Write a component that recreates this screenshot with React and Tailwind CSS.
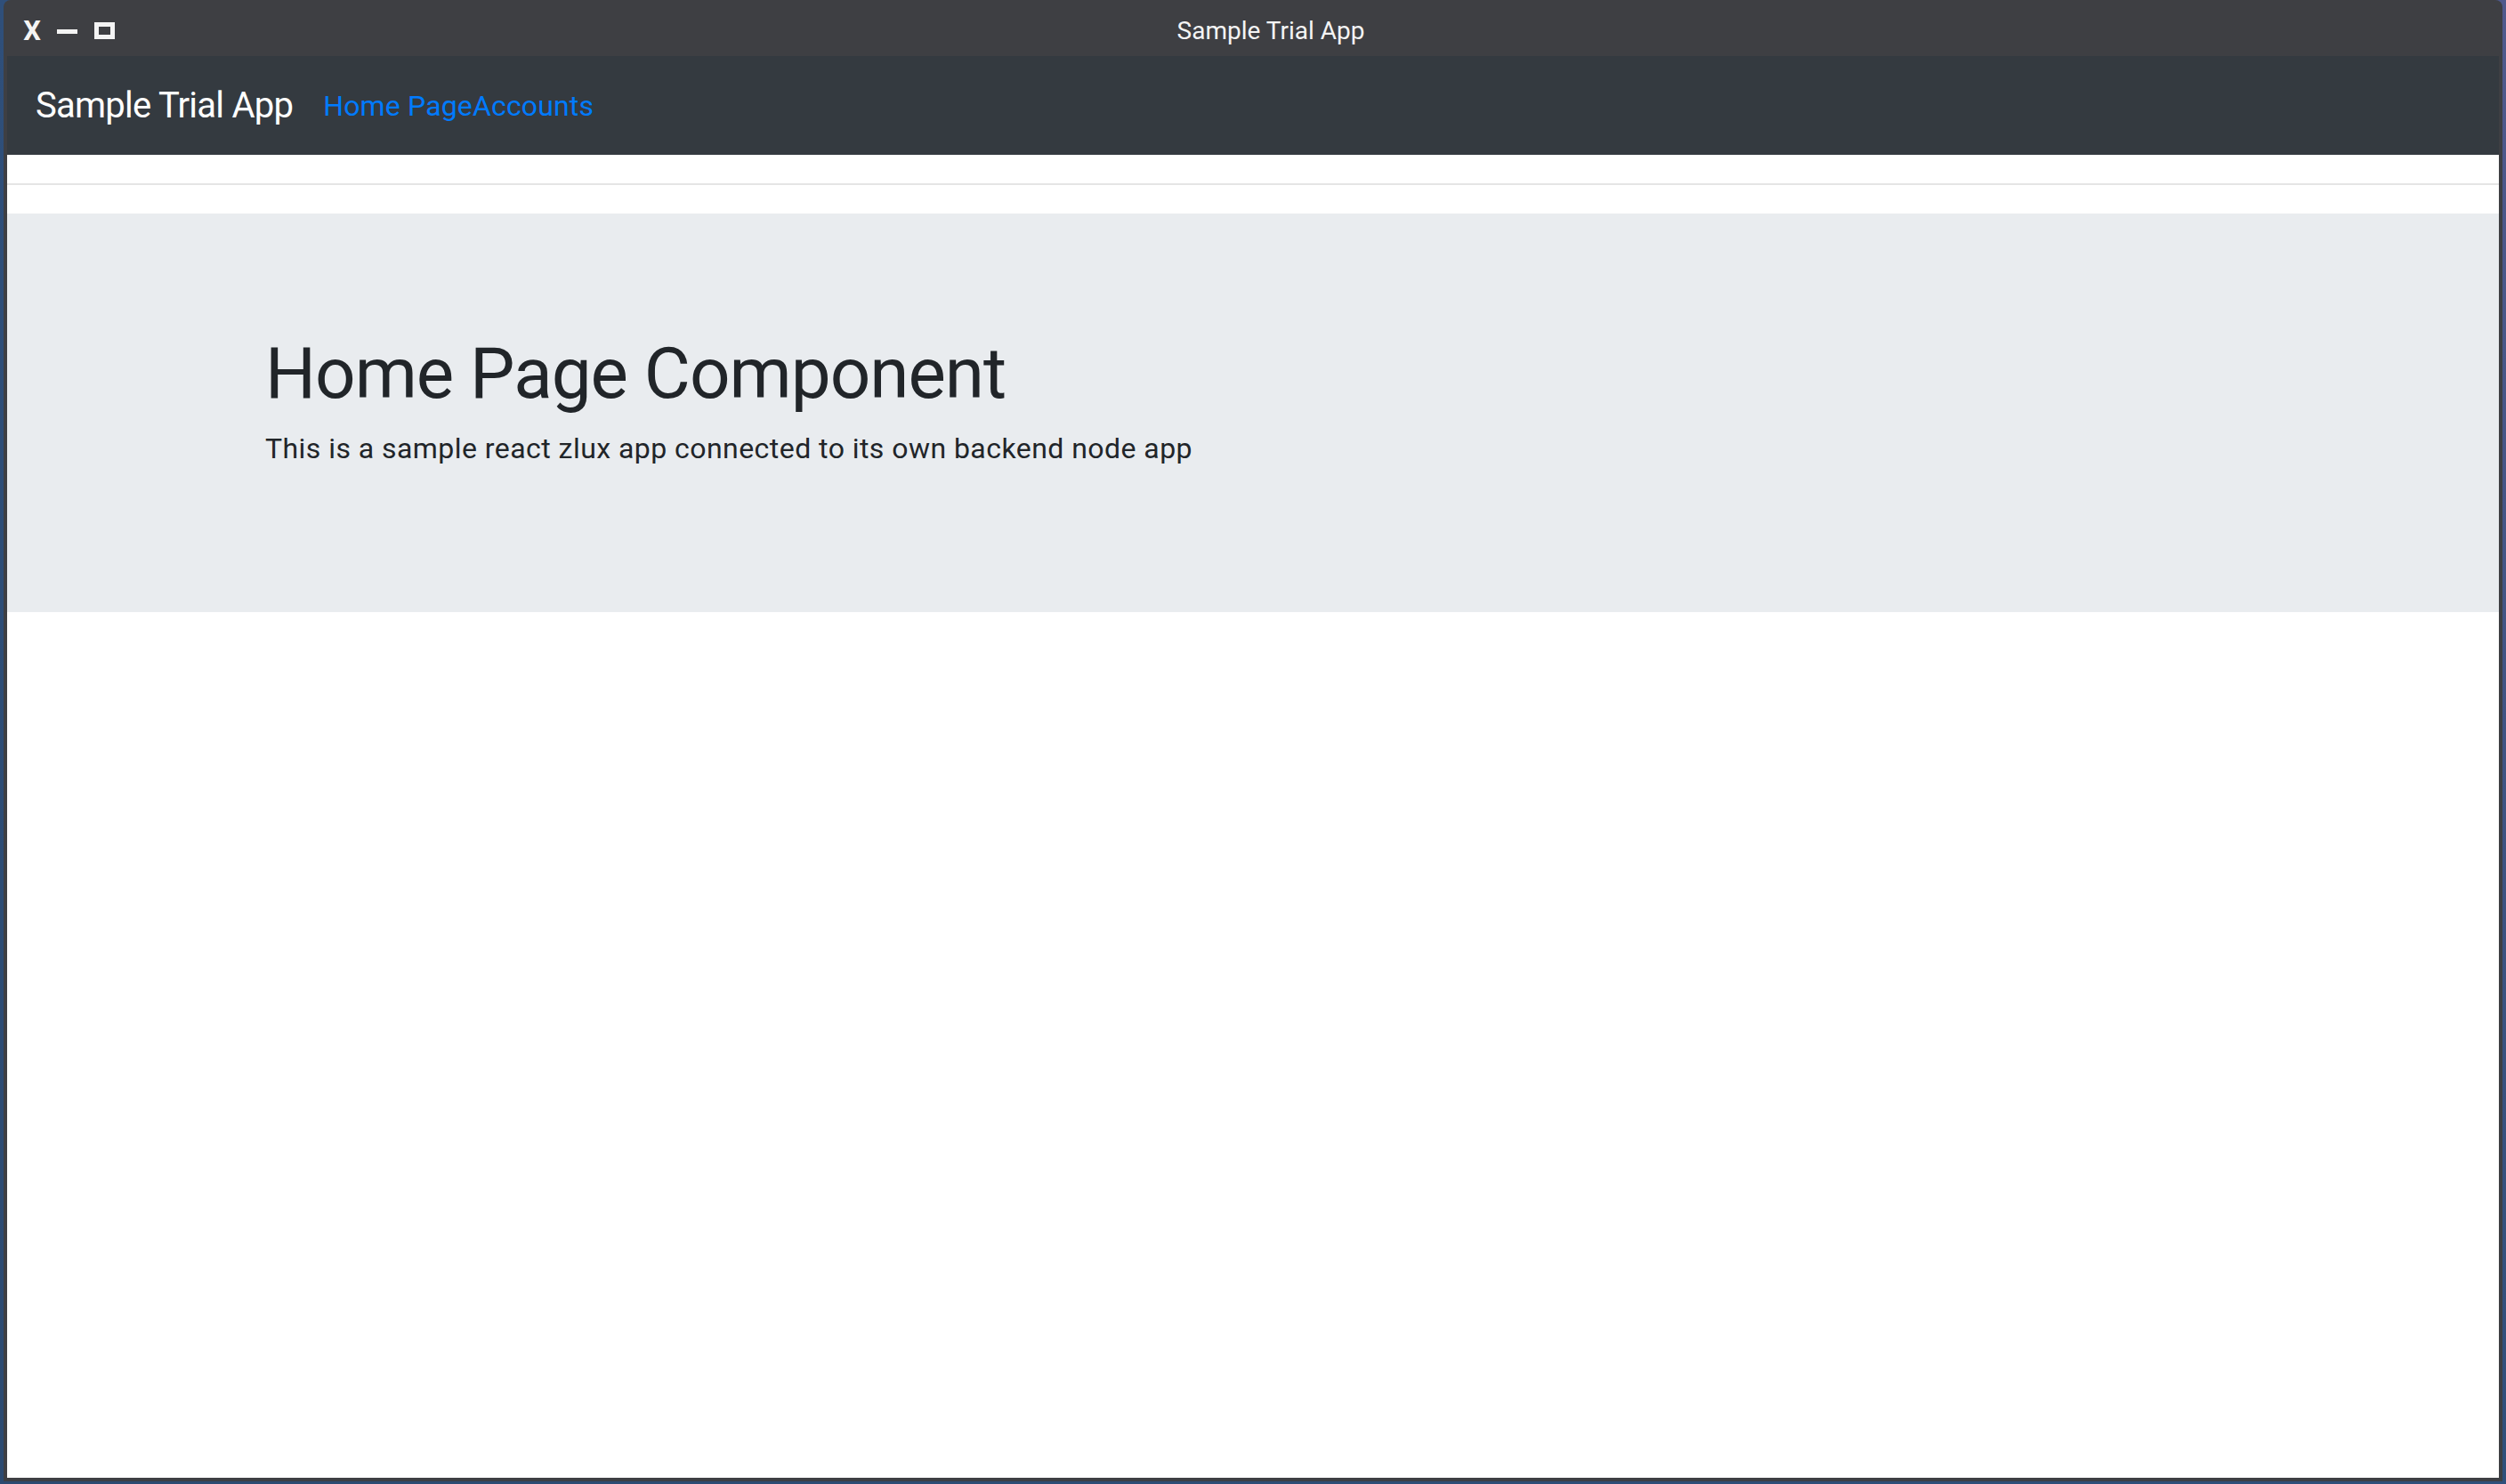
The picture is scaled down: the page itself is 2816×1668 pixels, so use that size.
import React from "react";

const TitleBar = ({ title }) => (
  <div className="h-[63px] flex items-center shrink-0 pt-[6px]">
    {/* window controls */}
    <div className="w-[140px] h-full flex items-center pl-[22px] text-[#f4f4f4]">
      <span
        className="text-[31px] font-bold leading-none w-[20px] flex justify-center"
        style={{ fontFamily: "Roboto, sans-serif" }}
      >
        X
      </span>
      <span className="ml-[18px] w-[23px] h-[5px] bg-[#f4f4f4] mt-[1px]" />
      <span className="ml-[19px] w-[23px] h-[19px] border-[5px] border-[#f4f4f4]" />
    </div>
    <div
      className="flex-1 text-center text-[28px] text-[#f4f4f4] leading-none"
      style={{ fontFamily: "Roboto, sans-serif" }}
    >
      {title}
    </div>
    <div className="w-[100px]" />
  </div>
);

const NavBar = () => (
  <nav className="h-[111px] shrink-0 bg-[#343a40] flex items-center px-[32px]">
    <span className="text-[40px] text-white mr-[34px] leading-none tracking-[-0.75px]">Sample Trial App</span>
    <div className="flex text-[32px] text-[#007bff] leading-none tracking-[0.15px]">
      <a>Home Page</a>
      <a>Accounts</a>
    </div>
  </nav>
);

export default function App() {
  return (
    <div
      className="w-full h-screen overflow-hidden bg-linear-to-bl from-[#4f598c] via-[#2f4f7a] to-[#2c4a70] px-[4px] pb-[3px]"
      style={{ fontFamily: "Roboto, 'Liberation Sans', sans-serif" }}
    >
      <div className="h-full flex flex-col bg-[#3e3f43] rounded-t-[8px]">
        <TitleBar title="Sample Trial App" />
        <div className="flex-1 mx-[4px] mb-[4px] bg-white flex flex-col text-[#212529]">
          <NavBar />
          <hr className="my-[32px] border-0 border-t-2 border-black/10" />
          <div className="bg-[#e9ecef] py-[128px] px-[64px]">
            <div className="w-[2280px] mx-auto px-[30px]">
              <h1 className="text-[80px] leading-[1.2] pt-[4px] mb-[12px] font-normal tracking-[-1px]">
                Home Page Component
              </h1>
              <p className="text-[32px] leading-[1.5] mb-[32px] tracking-[0.45px]">
                This is a sample react zlux app connected to its own backend node app
              </p>
            </div>
          </div>
        </div>
      </div>
    </div>
  );
}
